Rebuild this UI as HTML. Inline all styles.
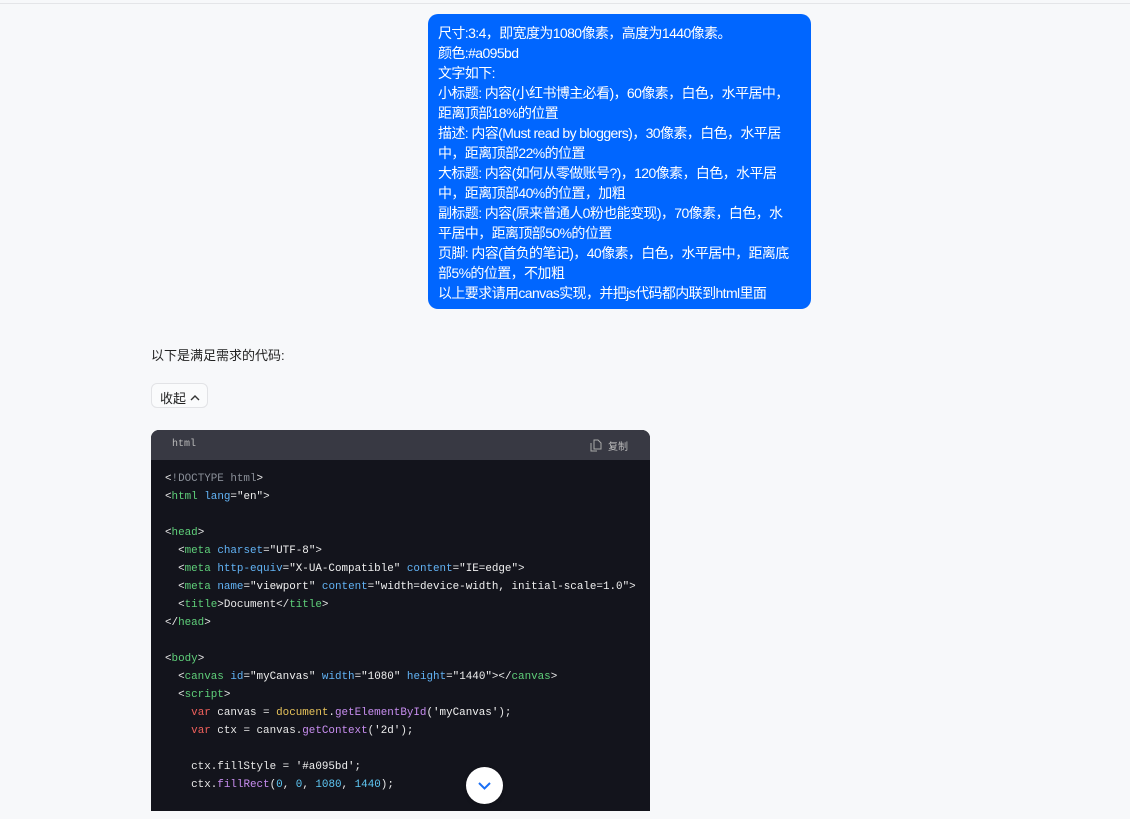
<!DOCTYPE html>
<html><head><meta charset="utf-8">
<style>
*{margin:0;padding:0;box-sizing:border-box}
html,body{width:1130px;height:819px;overflow:hidden;background:#f7f8fa;font-family:"Liberation Sans","Noto Sans CJK SC",sans-serif}
.topline{position:absolute;left:0;top:3px;width:1130px;height:1px;background:#e4e5e8}
.bubble{position:absolute;left:428px;top:14px;width:383px;height:295px;background:#0066ff;border-radius:10px;color:#fff;font-size:14px;line-height:20px;padding:9px 10px 0 10px;white-space:nowrap;letter-spacing:-0.6px}
.intro{position:absolute;left:151px;top:345px;font-size:13px;color:#222}
.btn{position:absolute;left:151px;top:383px;width:57px;height:25px;border:1px solid #e2e3e6;border-radius:6px;background:#fafbfc;font-size:13px;color:#222;padding:4px 0 0 8px}
.code{position:absolute;left:151px;top:430px;width:499px;height:381px;background:#13141c;border-radius:8px 8px 0 0;overflow:hidden}
.hdr{height:30px;background:#383943;position:relative;font-family:"Liberation Mono",monospace;font-size:10px;color:#bbb}
.hdr .l{position:absolute;left:21px;top:9px}
.hdr .r{position:absolute;right:22px;top:8px;font-family:"Liberation Sans","Noto Sans CJK SC",sans-serif}
pre{font-family:"Liberation Mono","DejaVu Sans Mono",monospace;font-size:10.9px;line-height:18px;color:#e8e8e8;padding:10px 0 0 14px;white-space:pre}
.t{color:#5fd07a}.a{color:#62b3f5}.s{color:#f0f0f0}.g{color:#8a8f98}.k{color:#f0605c}.f{color:#c88ef0}.y{color:#e6c25a}.n{color:#5fc8f5}
.down{position:absolute;left:466px;top:767px;width:37px;height:37px;border-radius:50%;background:#fff;box-shadow:0 1px 4px rgba(0,0,0,.2)}
</style></head><body>
<div class="topline"></div>
<div class="bubble">尺寸:3:4，即宽度为1080像素，高度为1440像素。<br>颜色:#a095bd<br>文字如下:<br>小标题: 内容(小红书博主必看)，60像素，白色，水平居中，<br>距离顶部18%的位置<br>描述: 内容(Must read by bloggers)，30像素，白色，水平居<br>中，距离顶部22%的位置<br>大标题: 内容(如何从零做账号?)，120像素，白色，水平居<br>中，距离顶部40%的位置，加粗<br>副标题: 内容(原来普通人0粉也能变现)，70像素，白色，水<br>平居中，距离顶部50%的位置<br>页脚: 内容(首负的笔记)，40像素，白色，水平居中，距离底<br>部5%的位置，不加粗<br>以上要求请用canvas实现，并把js代码都内联到html里面</div>
<div class="intro">以下是满足需求的代码:</div>
<div class="btn">收起 <svg width="10" height="8" viewBox="0 0 10 8" style="vertical-align:1px"><path d="M1 6L5 2L9 6" fill="none" stroke="#333" stroke-width="1.4"/></svg></div>
<div class="code">
<div class="hdr"><span class="l">html</span><span class="r"><svg width="12" height="13" viewBox="0 0 12 13" style="vertical-align:-2px"><path d="M4 1h4l3 3v6H4z M1 4v8h6" fill="none" stroke="#aaa" stroke-width="1"/></svg>&nbsp; 复制</span></div>
<pre>&lt;<span class="g">!DOCTYPE html</span>&gt;
&lt;<span class="t">html</span> <span class="a">lang</span>=<span class="s">"en"</span>&gt;

&lt;<span class="t">head</span>&gt;
  &lt;<span class="t">meta</span> <span class="a">charset</span>=<span class="s">"UTF-8"</span>&gt;
  &lt;<span class="t">meta</span> <span class="a">http-equiv</span>=<span class="s">"X-UA-Compatible"</span> <span class="a">content</span>=<span class="s">"IE=edge"</span>&gt;
  &lt;<span class="t">meta</span> <span class="a">name</span>=<span class="s">"viewport"</span> <span class="a">content</span>=<span class="s">"width=device-width, initial-scale=1.0"</span>&gt;
  &lt;<span class="t">title</span>&gt;Document&lt;/<span class="t">title</span>&gt;
&lt;/<span class="t">head</span>&gt;

&lt;<span class="t">body</span>&gt;
  &lt;<span class="t">canvas</span> <span class="a">id</span>=<span class="s">"myCanvas"</span> <span class="a">width</span>=<span class="s">"1080"</span> <span class="a">height</span>=<span class="s">"1440"</span>&gt;&lt;/<span class="t">canvas</span>&gt;
  &lt;<span class="t">script</span>&gt;
    <span class="k">var</span> canvas = <span class="y">document</span>.<span class="f">getElementById</span>(<span class="s">'myCanvas'</span>);
    <span class="k">var</span> ctx = canvas.<span class="f">getContext</span>(<span class="s">'2d'</span>);

    ctx.fillStyle = <span class="s">'#a095bd'</span>;
    ctx.<span class="f">fillRect</span>(<span class="n">0</span>, <span class="n">0</span>, <span class="n">1080</span>, <span class="n">1440</span>);</pre>
</div>
<div class="down"><svg width="37" height="37" viewBox="0 0 37 37"><path d="M13 16l5.5 5.5L24 16" fill="none" stroke="#1a6ff5" stroke-width="2"/></svg></div>
</body></html>
